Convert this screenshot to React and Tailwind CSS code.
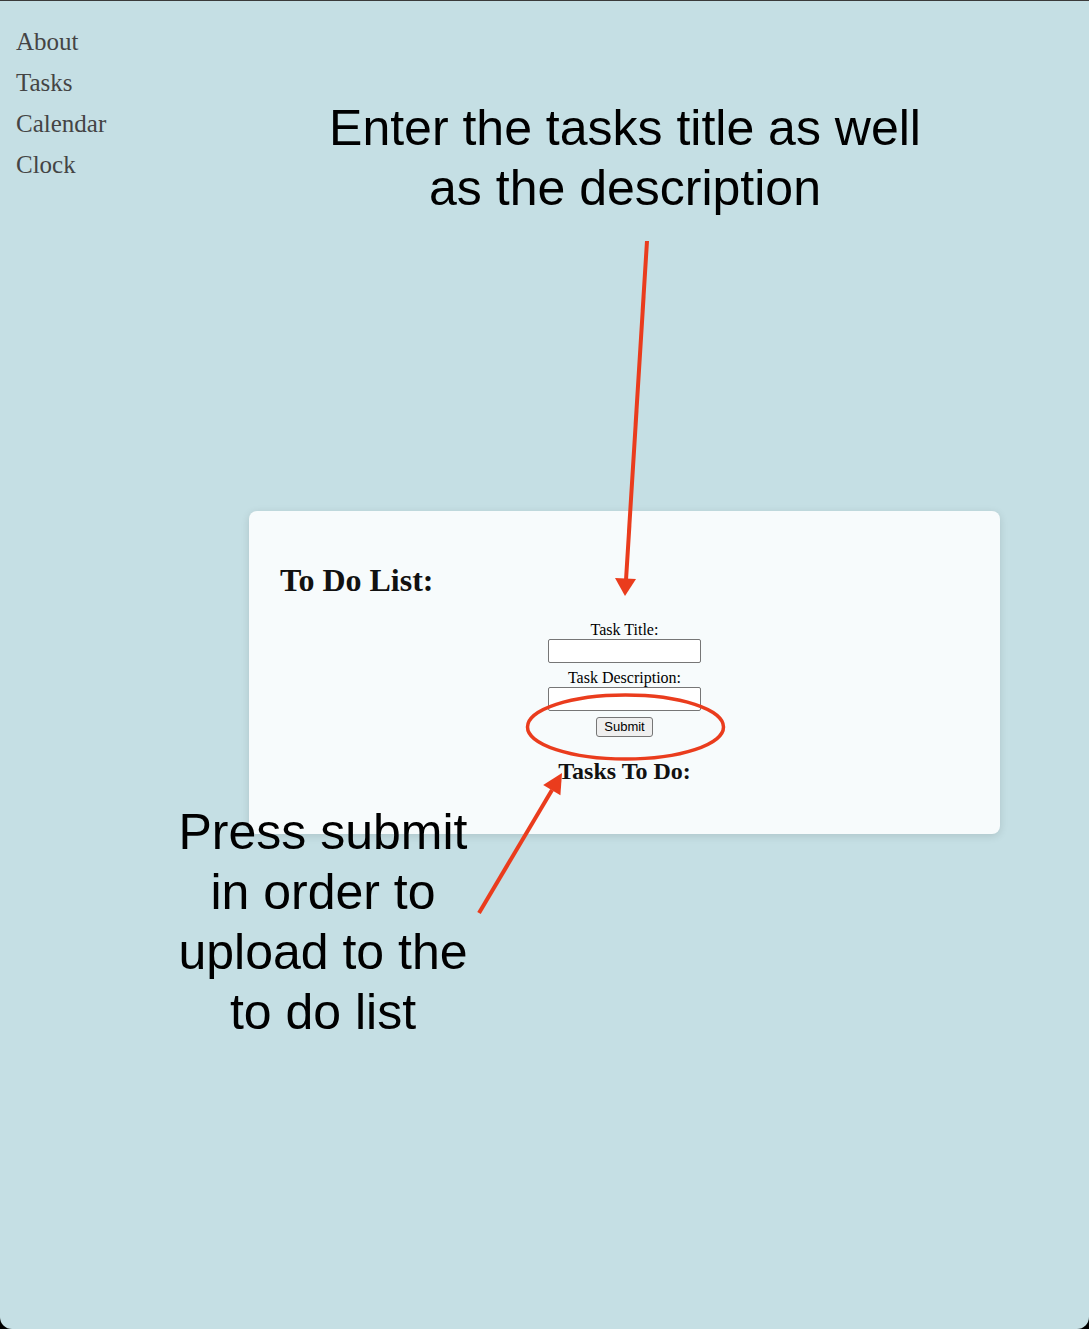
export default function App() {
    const navItems = ["About", "Tasks", "Calendar", "Clock"];

    return (
        <div className="h-[1329px] bg-black">
            <div
                className="relative h-full overflow-hidden rounded-b-[12px] border-t border-[#3a3a3a] bg-[#c5dfe4]"
                style={{ fontFamily: '"Liberation Serif", "Times New Roman", serif' }}
            >
                <nav className="px-4 pt-[20px]">
                    {navItems.map((item) => (
                        <div key={item} className="text-[25px] leading-[41px] text-[#444]">
                            {item}
                        </div>
                    ))}
                </nav>

                <div className="ml-[249px] mt-[326px] h-[323px] w-[751px] rounded-[8px] bg-[#f7fbfc] shadow-[0_2px_8px_rgba(0,0,0,0.12)]">
                    <h1 className="pl-[31px] pt-[51px] text-[32px] font-bold leading-[37px] text-[#111]">
                        To Do List:
                    </h1>
                    <form className="mt-[22px] flex flex-col items-center text-black">
                        <label className="text-[16px] leading-[18px]">Task Title:</label>
                        <input
                            type="text"
                            className="h-[24px] w-[153px] rounded-[2px] border border-[#767676] bg-white"
                        />
                        <label className="mt-[6px] text-[16px] leading-[18px]">Task Description:</label>
                        <input
                            type="text"
                            className="h-[24px] w-[153px] rounded-[2px] border border-[#767676] bg-white"
                        />
                        <button
                            type="button"
                            className="mt-[6px] h-[20px] rounded-[3px] border border-[#767676] bg-[#efefef] px-[7px] text-[13px] leading-[18px] text-black"
                            style={{ fontFamily: '"Liberation Sans", Arial, sans-serif' }}
                        >
                            Submit
                        </button>
                        <h2 className="mt-[16px] text-[24px] font-bold text-[#111]">Tasks To Do:</h2>
                    </form>
                </div>

                {/* annotations */}
                <div
                    className="absolute left-[325px] top-[97px] w-[600px] text-center text-[50px] leading-[60px] text-black"
                    style={{ fontFamily: '"Liberation Sans", Arial, sans-serif' }}
                >
                    Enter the tasks title as well
                    <br />
                    as the description
                </div>
                <div
                    className="absolute left-[163px] top-[801px] w-[320px] text-center text-[50px] leading-[60px] text-black"
                    style={{ fontFamily: '"Liberation Sans", Arial, sans-serif' }}
                >
                    Press submit
                    <br />
                    in order to
                    <br />
                    upload to the
                    <br />
                    to do list
                </div>

                <svg
                    className="pointer-events-none absolute inset-0"
                    width="1089"
                    height="1329"
                    viewBox="0 0 1089 1329"
                >
                    <line x1="647" y1="240" x2="626" y2="579" stroke="#ea3c1d" strokeWidth="4" />
                    <polygon points="615,577 636,578 625,595" fill="#ea3c1d" />
                    <ellipse cx="625.5" cy="726" rx="98" ry="32" fill="none" stroke="#ea3c1d" strokeWidth="3.5" />
                    <line x1="479" y1="912" x2="552" y2="789" stroke="#ea3c1d" strokeWidth="4" />
                    <polygon points="560.4,794.3 543.2,784.1 562,772" fill="#ea3c1d" />
                </svg>
            </div>
        </div>
    );
}
